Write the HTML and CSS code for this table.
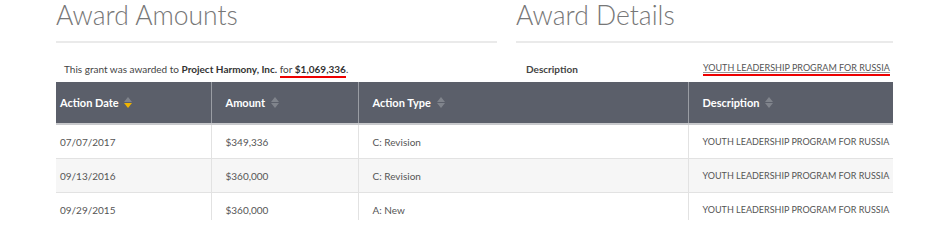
FILE: index.html
```html
<!DOCTYPE html>
<html>
<head>
<meta charset="utf-8">
<link rel="stylesheet" href="styles.css">
</head>
<body>
<div class="page">
  <div class="top">
    <section class="amounts">
      <h2 class="title">Award Amounts</h2>
      <p class="summary">This grant was awarded to <b>Project Harmony, Inc.</b> <span class="mark">for <b>$1,069,336</b></span>.</p>
    </section>
    <section class="details">
      <h2 class="title">Award Details</h2>
      <div class="detail-row">
        <span class="label">Description</span>
        <span class="value mark"><a href="#">YOUTH LEADERSHIP PROGRAM FOR RUSSIA</a></span>
      </div>
    </section>
  </div>
  <div class="table-wrap">
    <table class="grid">
      <colgroup>
        <col class="c1"><col class="c2"><col class="c3"><col class="c4">
      </colgroup>
      <thead>
        <tr>
          <th class="first">Action Date <span class="sort"><i class="up"></i><i class="down active"></i></span></th>
          <th>Amount <span class="sort"><i class="up"></i><i class="down"></i></span></th>
          <th>Action Type <span class="sort"><i class="up"></i><i class="down"></i></span></th>
          <th>Description <span class="sort"><i class="up"></i><i class="down"></i></span></th>
        </tr>
      </thead>
      <tbody>
        <tr><td class="first">07/07/2017</td><td>$349,336</td><td>C: Revision</td><td class="caps">YOUTH LEADERSHIP PROGRAM FOR RUSSIA</td></tr>
        <tr class="alt"><td class="first">09/13/2016</td><td>$360,000</td><td>C: Revision</td><td class="caps">YOUTH LEADERSHIP PROGRAM FOR RUSSIA</td></tr>
        <tr><td class="first">09/29/2015</td><td>$360,000</td><td>A: New</td><td class="caps">YOUTH LEADERSHIP PROGRAM FOR RUSSIA</td></tr>
      </tbody>
    </table>
  </div>
</div>
</body>
</html>
```
FILE: styles.css
```css
html, body {
  margin: 0;
  padding: 0;
  background: #fff;
}
body {
  font-family: Lato, "Open Sans", sans-serif;
  color: #555;
}
.page {
  width: 837px;
  padding-left: 56px;
}
.top {
  display: flex;
  gap: 20px;
}
.amounts {
  width: 441px;
}
.details {
  flex: 1;
}
.title {
  margin: 0;
  font-weight: 300;
  font-size: 26.5px;
  line-height: 30px;
  height: 30px;
  color: #777;
  border-bottom: 2px solid #eaeaea;
  padding-bottom: 11px;
}
.details .title {
  margin-left: -1px;
}
.summary {
  margin: 0;
  padding: 19px 0 0 8px;
  height: 20px;
  font-size: 10px;
  line-height: 14px;
  color: #444;
}
.summary b { color: #333; }
.mark {
  border-bottom: 2px solid #e00;
  padding-bottom: 1px;
}
.detail-row {
  display: flex;
  padding: 19px 0 0 9px;
  height: 20px;
  font-size: 10px;
  line-height: 14px;
  white-space: nowrap;
}
.label {
  width: 177px;
  flex: none;
  font-weight: bold;
  color: #444;
}
.value.mark {
  align-self: flex-start;
  line-height: 12px;
  font-size: 9px;
  padding-bottom: 0;
}
.value a {
  color: #555;
  text-decoration: underline;
  text-decoration-color: #999;
}
.table-wrap {
  height: 138px;
  overflow: hidden;
}
.grid {
  width: 837px;
  border-collapse: collapse;
  table-layout: fixed;
  font-size: 10px;
}
.c1 { width: 155px; }
.c2 { width: 147px; }
.c3 { width: 330px; }
.c4 { width: 205px; }
.grid th {
  background: #5b5f6a;
  color: #fff;
  font-weight: bold;
  font-size: 11px;
  text-align: left;
  height: 41px;
  padding: 0 0 0 14px;
  border-left: 1px solid #9a9da4;
  border-bottom: 2px solid #c8c9cc;
  white-space: nowrap;
}
.grid th.first {
  border-left: none;
  padding-left: 4px;
}
.grid td {
  height: 33px;
  padding: 0 0 0 14px;
  border-left: 1px solid #e2e2e2;
  border-bottom: 1px solid #e2e2e2;
  color: #555;
  white-space: nowrap;
  overflow: hidden;
}
.grid td.caps {
  font-size: 9px;
}
.grid td.first {
  border-left: none;
  padding-left: 4px;
}
.grid tr.alt td {
  background: #f6f6f6;
}
.sort {
  display: inline-flex;
  flex-direction: column;
  gap: 1px;
  vertical-align: middle;
  margin-left: 3px;
  position: relative;
  top: -1px;
}
.sort i {
  display: block;
  width: 0;
  height: 0;
  border-left: 4.5px solid transparent;
  border-right: 4.5px solid transparent;
}
.sort .up {
  border-bottom: 5px solid #80848c;
}
.sort .down {
  border-top: 5px solid #80848c;
}
.sort .down.active {
  border-top-color: #f0b400;
}
```
